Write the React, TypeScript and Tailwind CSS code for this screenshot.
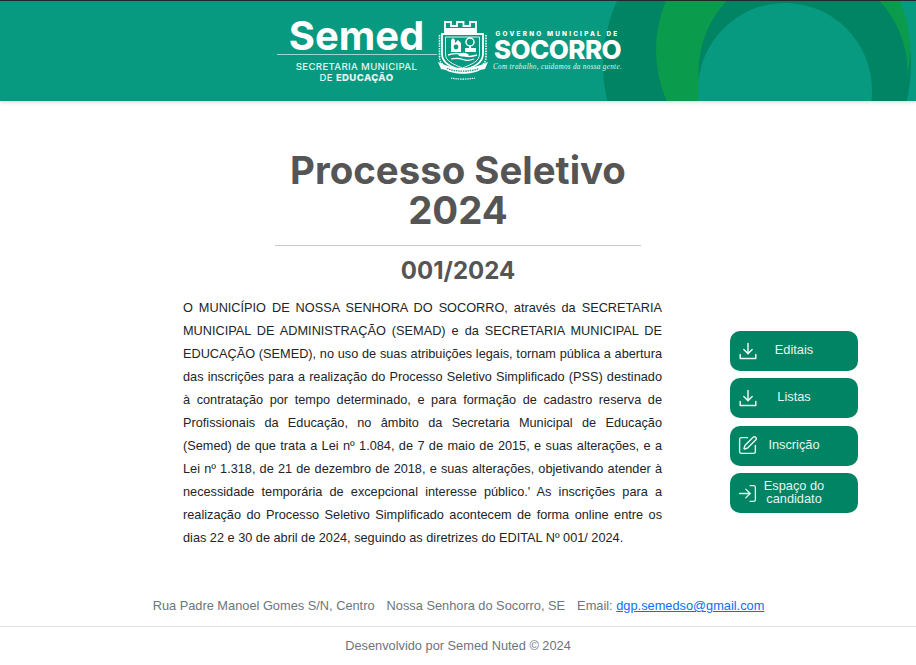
import React from 'react';
import { LogIn, SquarePen } from 'lucide-react';

const DownloadTray = () => (
  <svg width="18" height="18" viewBox="0 0 18 18" fill="none" stroke="currentColor" strokeWidth="1.5" strokeLinecap="round" strokeLinejoin="round">
    <path d="M9 1.5v10" />
    <path d="M4.8 7.5 9 11.6l4.2-4.1" />
    <path d="M1.2 12.5v4h15.6v-4" />
  </svg>
);

const Crest = () => (
  <svg width="50" height="62" viewBox="0 0 50 62" fill="none" stroke="#fff">
    {/* crown */}
    <path strokeWidth="1.8" d="M7 13V2h6v4h6V2h6.5v4H32V2h6v11" />
    <path fill="#fff" stroke="none" d="M7 8h31v5H7z" />
    {/* shield */}
    <path strokeWidth="1.8" d="M4 14h41v20c0 9-9 13-20.500 17C13 47 4 43 4 34z" />
    <path strokeWidth=".9" d="M7.500 17h34v17c0 7-7 10-17 14C14.500 44 7.500 41 7.500 34z" />
    {/* church on the left, tree on the right */}
    <path fill="#fff" stroke="none" d="M13 20l2-2 2 2v3l3-3 3 3v9H13z" />
    <circle cx="18" cy="27" r="2.4" fill="#089a80" stroke="none" />
    <circle cx="32" cy="22" r="4" strokeWidth="1.5" />
    <path fill="#fff" stroke="none" d="M31 25h2v4h-2zM27 28h11v4H27z" />
    {/* hills and water */}
    <path strokeWidth="1.5" d="M10 35c6-2 11-2 15 0s8 2 14 0" />
    <path fill="#fff" stroke="none" d="M20 35c3-3 8-3 11 0-3 2-8 2-11 0z" />
    <path strokeWidth="1.2" d="M13 39c5-1 8-1 12 .5s7 1 11-.5" />
    {/* side leaves */}
    <path strokeWidth="1.6" strokeDasharray="1.6 1" d="M1.500 15v22c0 4 2 7 5 9M48 15v22c0 4-2 7-5 9" />
    {/* ribbon */}
    <path fill="#fff" stroke="none" d="M0 42l7 3c10 4 25 4 36 0l7-3-3 7-5 1c-8 5-26 5-34 0l-5-1z" />
    <path stroke="#089a80" strokeWidth="1.300" strokeDasharray="1.500 .8" d="M9 48.500c9 3.500 23 3.500 32 0" />
    {/* year under the crest */}
    <path strokeWidth="1.100" strokeDasharray="1.500 .8" d="M13 58c7 1.500 17 1.500 24 0" />
  </svg>
);

// decorative circles on the right side of the banner
const BannerCircles = () => (
  <svg className="absolute inset-0 h-full w-full" viewBox="0 0 916 100" preserveAspectRatio="none">
    <circle cx="757" cy="64" r="154" fill="#008463" />
    <circle cx="783" cy="49" r="127" fill="#0b9b4c" />
    <circle cx="803" cy="71" r="104.5" fill="#008463" />
    <circle cx="785" cy="89" r="87" fill="#089a80" />
  </svg>
);

const buttons = [
  { label: 'Editais', icon: <DownloadTray /> },
  { label: 'Listas', icon: <DownloadTray /> },
  { label: 'Inscrição', icon: <SquarePen size={23} strokeWidth={1.6} /> },
  { label: 'Espaço do candidato', icon: <LogIn size={21} strokeWidth={1.5} /> },
];

const App = () => {
  return (
    <div className="h-[665px] w-[916px] overflow-hidden bg-white font-['Liberation_Sans',Arial,sans-serif] text-[12.8px]">
      <header className="relative h-[101px] overflow-hidden border-t border-[#22282c] bg-[#089a80] shadow-[0_1px_4px_rgba(0,0,0,0.18)]">
        <BannerCircles />
        <div className="relative flex h-full items-start justify-center pr-[18px] pt-[17px] text-white">
          <div className="flex w-[160px] flex-col items-center">
            <div className="font-['Inter',sans-serif] text-[40px] font-bold leading-[36px]">Semed</div>
            <div className="h-px w-full bg-white/60" />
            <div className="mt-[6px] text-center font-['Inter',sans-serif] text-[9.6px] font-medium leading-[11px] tracking-[0.35px] opacity-90">
              SECRETARIA MUNICIPAL
              <br />
              DE <span className="font-extrabold">EDUCAÇÃO</span>
            </div>
          </div>
          <div className="ml-[1px] mt-[2px]">
            <Crest />
          </div>
          <div className="ml-[6px] flex w-[128px] flex-col items-center pt-[12px]">
            <div className="h-[8px] whitespace-nowrap font-['Inter',sans-serif] text-[6.4px] font-extrabold leading-[8px] tracking-[2.2px]">GOVERNO MUNICIPAL DE</div>
            <div className="h-[24px] whitespace-nowrap font-['Inter',sans-serif] text-[26px] font-extrabold leading-[24px] tracking-[-0.6px]">SOCORRO</div>
            <div className="mt-[1px] h-[9px] whitespace-nowrap font-['Liberation_Serif',serif] text-[7.2px] italic leading-[9px] tracking-[0.3px] opacity-90">Com trabalho, cuidamos da nossa gente.</div>
          </div>
        </div>
      </header>

      <main>
        <div className="mx-auto mt-[49px] flex w-[366px] flex-col items-center text-[#555555]">
          <h1 className="text-center font-['Inter',sans-serif] text-[38.4px] font-bold leading-[40px]">
            Processo Seletivo
            <br />
            2024
          </h1>
          <hr className="mt-[15px] w-full border-[#c9c9c9]" />
          <h2 className="mt-[10px] font-['Inter',sans-serif] text-[24px] font-bold leading-[29px]">001/2024</h2>
        </div>

        <div className="mt-[11px] flex items-center pl-[183px]">
          <p className="w-[479px] text-justify text-[12.72px] leading-[23px] text-[#212529]">
            O MUNICÍPIO DE NOSSA SENHORA DO SOCORRO, através da SECRETARIA MUNICIPAL DE ADMINISTRAÇÃO (SEMAD) e da SECRETARIA MUNICIPAL DE EDUCAÇÃO (SEMED), no uso de suas atribuições legais, tornam pública a abertura das inscrições para a realização do Processo Seletivo Simplificado (PSS) destinado à contratação por tempo determinado, e para formação de cadastro reserva de Profissionais da Educação, no âmbito da Secretaria Municipal de Educação (Semed) de que trata a Lei nº 1.084, de 7 de maio de 2015, e suas alterações, e a Lei nº 1.318, de 21 de dezembro de 2018, e suas alterações, objetivando atender à necessidade temporária de excepcional interesse público.' As inscrições para a realização do Processo Seletivo Simplificado acontecem de forma online entre os dias 22 e 30 de abril de 2024, seguindo as diretrizes do EDITAL Nº 001/ 2024.
          </p>
          <div className="mb-[1px] ml-[68px] flex w-[128px] flex-col gap-[7.6px]">
            {buttons.map((b) => (
              <a key={b.label} className="flex h-[40px] items-center rounded-[10px] bg-[#008463] pl-[7px] text-[#e6f5f0]">
                <span className="flex w-[21px] shrink-0 items-center justify-center">{b.icon}</span>
                <span className="mb-[3px] flex-1 pr-[28px] text-center text-[12.8px] leading-[13px]">{b.label}</span>
              </a>
            ))}
          </div>
        </div>
      </main>

      <footer className="mt-[50px] text-[12.8px] text-[#6c757d]">
        <div className="flex h-[28px] items-start justify-center gap-[12px] border-b border-[#dee2e6] pl-[1px] leading-[14px]">
          <span>Rua Padre Manoel Gomes S/N, Centro</span>
          <span>Nossa Senhora do Socorro, SE</span>
          <span>
            Email: <a className="text-[#0d6efd] underline">dgp.semedso@gmail.com</a>
          </span>
        </div>
        <div className="mt-[12px] text-center leading-[14px]">Desenvolvido por Semed Nuted © 2024</div>
      </footer>
    </div>
  );
};

export default App;
